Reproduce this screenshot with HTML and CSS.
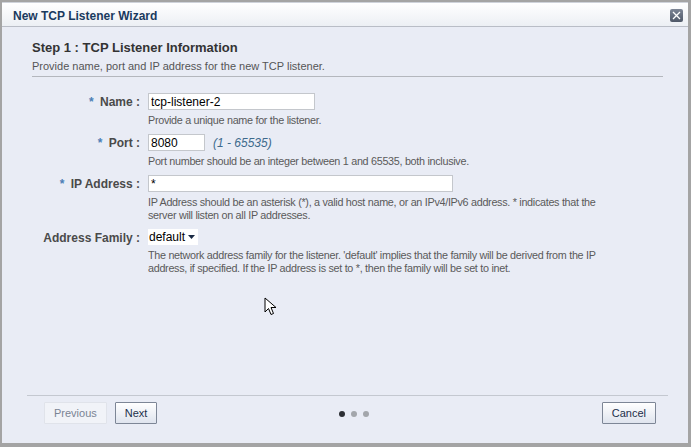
FILE: index.html
```html
<!DOCTYPE html>
<html lang="en">
<head>
  <meta charset="UTF-8">
  <title>New TCP Listener Wizard</title>
  <link rel="stylesheet" href="styles.css">
</head>
<body>
  <div class="dialog">
    <div class="title-bar">
      <span class="title">New TCP Listener Wizard</span>
      <span class="close-btn">
        <svg width="13" height="13" viewBox="0 0 13 13">
          <path d="M3 3 L10 10 M10 3 L3 10" stroke="#fff" stroke-width="1.3"/>
        </svg>
      </span>
    </div>

    <div class="content">
      <div class="step-head">
        <h2>Step 1 : TCP Listener Information</h2>
        <p>Provide name, port and IP address for the new TCP listener.</p>
      </div>

      <div class="form">
        <div class="row">
          <label class="label"><span class="req">*</span> Name :</label>
          <div class="field">
            <input class="input name-input" type="text" value="tcp-listener-2">
            <div class="help">Provide a unique name for the listener.</div>
          </div>
        </div>

        <div class="row">
          <label class="label"><span class="req">*</span> Port :</label>
          <div class="field">
            <div class="inline">
              <input class="input port-input" type="text" value="8080">
              <span class="range">(1 - 65535)</span>
            </div>
            <div class="help">Port number should be an integer between 1 and 65535, both inclusive.</div>
          </div>
        </div>

        <div class="row">
          <label class="label"><span class="req">*</span> IP Address :</label>
          <div class="field">
            <input class="input ip-input" type="text" value="*">
            <div class="help">IP Address should be an asterisk (*), a valid host name, or an IPv4/IPv6 address. * indicates that the server will listen on all IP addresses.</div>
          </div>
        </div>

        <div class="row">
          <label class="label">Address Family :</label>
          <div class="field">
            <div class="select">
              <span>default</span>
              <svg width="9" height="6" viewBox="0 0 9 6"><path d="M1 1 L8 1 L4.5 5 Z" fill="#1a2a44"/></svg>
            </div>
            <div class="help">The network address family for the listener. 'default' implies that the family will be derived from the IP address, if specified. If the IP address is set to *, then the family will be set to inet.</div>
          </div>
        </div>
      </div>

      <svg class="cursor" width="14" height="20" viewBox="0 0 14 20">
        <path d="M1 1 L1 15 L4.5 11.5 L7 17.5 L9.5 16.5 L7 10.5 L12 10.5 Z" fill="#fff" stroke="#000" stroke-width="1"/>
      </svg>
    </div>

    <div class="footer">
      <div class="footer-left">
        <button class="btn btn-disabled">Previous</button>
        <button class="btn">Next</button>
      </div>
      <div class="dots">
        <span class="dot dot-active"></span>
        <span class="dot"></span>
        <span class="dot"></span>
      </div>
      <div class="footer-right">
        <button class="btn">Cancel</button>
      </div>
    </div>
  </div>
</body>
</html>
```

FILE: styles.css
```css
/* General Styles */
body {
  margin: 0;
  width: 691px;
  height: 447px;
  background: #a4a4a4;
  font-family: 'Liberation Sans', Arial, sans-serif;
  font-size: 11px;
  color: #333;
  overflow: hidden;
}

.dialog {
  box-sizing: border-box;
  margin: 2px 0 0 2px;
  width: 686px;
  height: 441px;
  background: #e9ecf5;
  border-top: 1px solid #cfd3db;
  display: flex;
  flex-direction: column;
}

/* Title bar */
.title-bar {
  height: 23px;
  display: flex;
  align-items: center;
  justify-content: space-between;
  padding: 0 5px 0 11px;
  background: linear-gradient(#ffffff, #eceff4);
  border-bottom: 1px solid #b9bdc6;
}

.title {
  font-weight: bold;
  font-size: 12px;
  color: #1a3a5e;
  margin-top: 2px;
}

.close-btn {
  width: 13px;
  height: 13px;
  border-radius: 2px;
  background: linear-gradient(#7c8595, #4f5868);
  display: flex;
  margin-top: 1px;
}

/* Content */
.content {
  flex: 1;
  padding: 13px 25px 0 30px;
  position: relative;
}

.step-head {
  border-bottom: 1px solid #b4b7bd;
  padding-bottom: 4px;
}

.step-head h2 {
  margin: 0;
  font-size: 13px;
  font-weight: bold;
  color: #333;
}

.step-head p {
  margin: 5px 0 0;
  color: #555;
}

.form {
  padding-top: 16px;
}

.row {
  display: flex;
  margin-bottom: 7px;
}

.label {
  width: 108px;
  flex-shrink: 0;
  text-align: right;
  font-weight: bold;
  font-size: 12px;
  color: #4a4a4a;
  padding-top: 2px;
  margin-right: 8px;
}

.req {
  color: #4b7fb6;
  margin-right: 3px;
}

.field {
  flex: 1;
}

.input {
  box-sizing: border-box;
  height: 17px;
  padding: 1px 2px;
  border: 1px solid #c4c7cc;
  background: #fff;
  font-family: 'Liberation Sans', Arial, sans-serif;
  font-size: 12px;
  color: #000;
  outline: none;
  display: block;
}

.name-input { width: 167px; }
.port-input { width: 57px; }
.ip-input { width: 305px; }

.inline {
  display: flex;
  align-items: center;
}

.range {
  margin-left: 8px;
  font-style: italic;
  font-size: 12px;
  color: #3d6a8c;
}

.help {
  margin-top: 4px;
  width: 470px;
  line-height: 13px;
  color: #5a5a5a;
  font-size: 10.8px;
  letter-spacing: -0.3px;
}

.select {
  display: inline-flex;
  align-items: center;
  gap: 2px;
  height: 16px;
  padding: 0 2px 0 1px;
  background: #fff;
  font-size: 12px;
  color: #000;
}

.cursor {
  position: absolute;
  left: 262px;
  top: 270px;
}

/* Footer */
.footer {
  margin: 0 20px 0 25px;
  border-top: 1px solid #c4c8d0;
  height: 48px;
  display: grid;
  grid-template-columns: 1fr auto 1fr;
  align-items: start;
  padding: 6px 12px 0 17px;
  box-sizing: border-box;
}

.footer-left {
  display: flex;
  gap: 8px;
}

.footer-right {
  display: flex;
  justify-content: flex-end;
}

.btn {
  height: 22px;
  padding: 0 9px;
  font-family: 'Liberation Sans', Arial, sans-serif;
  font-size: 11px;
  color: #1c2f4a;
  background: linear-gradient(#ffffff, #dfe4ee);
  border: 1px solid #7d8696;
  border-radius: 1px;
}

.btn-disabled {
  color: #7a8494;
  background: #f1f3f8;
  border-color: #e0e3ea;
}

.dots {
  display: flex;
  gap: 6px;
  margin-top: 9px;
  margin-left: 8px;
}

.dot {
  width: 6px;
  height: 6px;
  border-radius: 50%;
  background: #a3a6ab;
}

.dot-active {
  background: #2c2f34;
}
```
